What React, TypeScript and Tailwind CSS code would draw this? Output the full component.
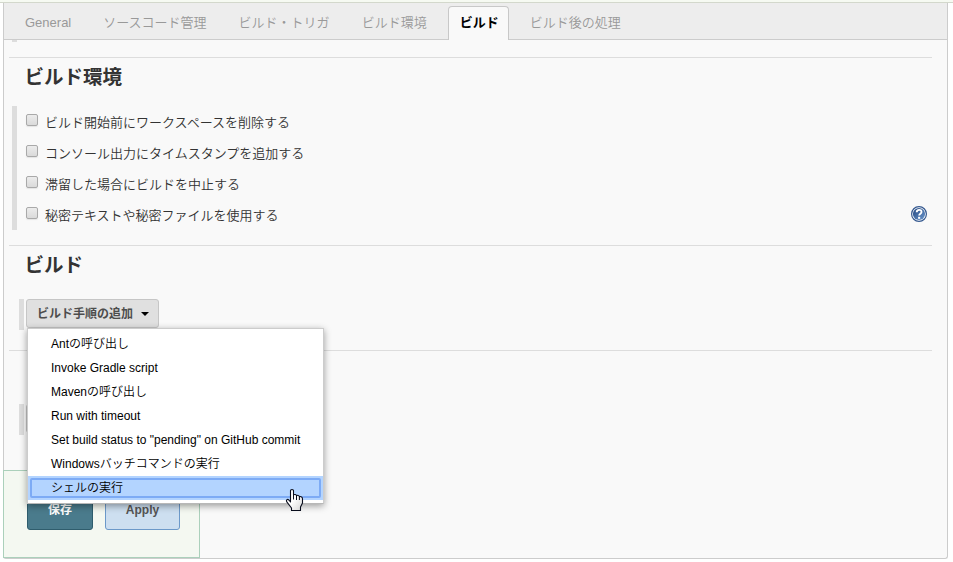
import React from "react";

const TABS = ["General", "ソースコード管理", "ビルド・トリガ", "ビルド環境", "ビルド", "ビルド後の処理"];
const OPTIONS = [
  "ビルド開始前にワークスペースを削除する",
  "コンソール出力にタイムスタンプを追加する",
  "滞留した場合にビルドを中止する",
  "秘密テキストや秘密ファイルを使用する",
];
const STEPS = [
  "Antの呼び出し",
  "Invoke Gradle script",
  "Mavenの呼び出し",
  "Run with timeout",
  'Set build status to "pending" on GitHub commit',
  "Windowsバッチコマンドの実行",
  "シェルの実行",
];

function TabBar() {
  return (
    <nav className="flex h-[37px] items-end gap-[10px] border-b border-[#ccc] bg-[#ededed] pl-[10px]">
      {TABS.map((tab) =>
        tab === "ビルド" ? (
          <div
            key={tab}
            className="-mb-px h-[34px] rounded-t-[4px] border border-b-0 border-[#c8c8c8] bg-[#f9f9f9] pr-[9px] pl-[11px] text-[13px] leading-[31px] font-bold whitespace-nowrap text-black"
          >
            {tab}
          </div>
        ) : (
          <div key={tab} className="h-[33px] px-[11px] text-[13px] leading-[33px] whitespace-nowrap text-[#999]">
            {tab}
          </div>
        ),
      )}
    </nav>
  );
}

function HelpIcon() {
  return (
    <svg className="-mt-[2px] block h-4 w-4" viewBox="0 0 16 16">
      <defs>
        <linearGradient id="help" x1="0" y1="0" x2="1" y2="1">
          <stop offset="0" stopColor="#22467f" />
          <stop offset="1" stopColor="#6c98ce" />
        </linearGradient>
      </defs>
      <circle cx="8" cy="8" r="7.4" fill="#fff" stroke="#34588f" strokeWidth="1.2" />
      <circle cx="8" cy="8" r="6.1" fill="url(#help)" />
      <path d="M5.7 6.2C5.8 3.2 10.5 3.1 10.5 5.9C10.5 7.7 8.2 7.7 8.2 9.6" fill="none" stroke="#fff" strokeWidth="1.9" />
      <rect x="7.1" y="10.8" width="2.1" height="2" fill="#fff" />
    </svg>
  );
}

function Checkbox() {
  return (
    <span className="h-3 w-3 shrink-0 rounded-[2px] border border-[#a9a9a9] bg-linear-to-b from-[#ececec] to-[#dadada] shadow-[0_1px_1px_#e4e4e4]" />
  );
}

function StepMenu() {
  return (
    <ul className="absolute top-[29px] left-px z-20 h-[176px] w-[297px] border border-[#ccc] border-b-[#b8b8b8] bg-white pt-[3px] text-[12px] leading-[24px] text-black shadow-[0_2px_7px_rgba(0,0,0,0.38)]">
      {STEPS.map((step, i) =>
        i === STEPS.length - 1 ? (
          <li key={step} className="flex h-[24px] bg-[#b3d4ff] p-[2px]">
            <div className="flex-1 rounded-[2px] border-2 border-[#7dabf5] pl-[19px] leading-[16px]">{step}</div>
          </li>
        ) : (
          <li key={step} className="h-[24px] pl-[23px] whitespace-nowrap">
            {step}
          </li>
        ),
      )}
    </ul>
  );
}

function HandCursor() {
  return (
    <svg className="absolute top-[488px] left-[285px] z-30 h-[24px] w-[19px]" viewBox="0 0 19 24">
      <defs>
        <linearGradient id="hand" x1="0" y1="0" x2="1" y2="1">
          <stop offset="0.45" stopColor="#fff" />
          <stop offset="1" stopColor="#d4d4d4" />
        </linearGradient>
      </defs>
      <path
        d="M5.5 2.5Q5.5 1.5 7 1.5T8.5 2.5V7Q9 6.3 10.2 6.5Q11.4 6.7 11.5 7.8Q12.3 7 13.3 7.4Q14.4 7.8 14.4 8.8Q15.5 8.2 16.6 9Q17.5 9.6 17.5 11V15L15.5 19V22.5H6.5V20L2 14.2Q1 12.7 1.8 11.8Q2.8 10.9 4 12.2L5.5 14Z"
        fill="url(#hand)"
        stroke="#080c1c"
        strokeWidth="1.1"
        strokeLinejoin="round"
      />
      <path d="M8.5 7V11.5M11.5 7.8V12M14.4 8.8V12" stroke="#080c1c" fill="none" />
    </svg>
  );
}

export default function App() {
  return (
    <div className="relative h-[562px] w-[953px] overflow-hidden bg-white font-['Liberation_Sans','Noto_Sans_CJK_JP',sans-serif] font-[350] text-[#333]">
      <div className="h-[3px] border-b border-[#d3d8cc] bg-[#f6faf2]" />
      <main className="ml-[3px] h-[556px] w-[945px] rounded-b-[3px] border border-t-0 border-[#ccc] bg-[#f9f9f9]">
        <TabBar />
        <div className="ml-2 h-[2px] w-[5px] bg-[#ddd]" />
        <div className="mr-[15px] ml-[5px]">
          <section className="mt-[15px] h-[188px] border-t border-[#ddd]">
            <h2 className="h-[48px] pl-[15.5px] text-[19.5px] leading-[38px] font-bold">ビルド環境</h2>
            <div className="ml-[3px] border-l-[5px] border-[#ddd]">
              {OPTIONS.map((option, i) => (
                <label key={option} className="flex h-[31px] items-center pr-[5px] pl-[9px]">
                  <span className="-mt-[3px] flex">
                    <Checkbox />
                  </span>
                  <span className="ml-[7px] flex-1 pt-[3px] text-[13px] leading-[30px] whitespace-nowrap">{option}</span>
                  {i === 3 && <HelpIcon />}
                </label>
              ))}
            </div>
          </section>
          <section className="h-[105px] border-t border-[#ddd]">
            <h2 className="h-[53px] pl-[15.5px] text-[19.5px] leading-[38px] font-bold">ビルド</h2>
            <div className="ml-[10px] flex h-[31px] border-l-[5px] border-[#ddd] pl-[2px]">
              <div className="relative h-[29px] w-[133px]">
                <button className="flex h-full w-full items-center rounded-[3px] border border-[#c6c6c6] bg-[#e0e0e0] pl-[10px] text-[12px] font-bold whitespace-nowrap text-[#4d4d4d]">
                  ビルド手順の追加
                  <span className="mt-px ml-[8px] h-0 w-0 border-x-4 border-t-4 border-x-transparent border-t-black" />
                </button>
                <StepMenu />
              </div>
            </div>
          </section>
          <section className="border-t border-[#ddd] pt-[53px]">
            <div className="ml-[10px] flex h-[31px] border-l-[5px] border-[#ddd] pl-[2px]">
              <div className="h-[29px] w-[133px] rounded-[3px] border border-[#c6c6c6] bg-[#e0e0e0]" />
            </div>
          </section>
        </div>
      </main>
      <footer className="absolute top-[470px] left-[3px] flex h-[88px] w-[197px] gap-3 border border-[#abd0bb] bg-[#f4f8f1] pt-[19px] pl-[23px] text-[12px] font-bold">
        <button className="h-[40px] w-[66px] rounded-[3px] border border-[#2f5d6d] bg-[#4a7b8c] text-white">保存</button>
        <button className="h-[40px] w-[75px] rounded-[3px] border border-[#6c99c9] bg-[#cddff0] text-[#555]">Apply</button>
      </footer>
      <HandCursor />
    </div>
  );
}
